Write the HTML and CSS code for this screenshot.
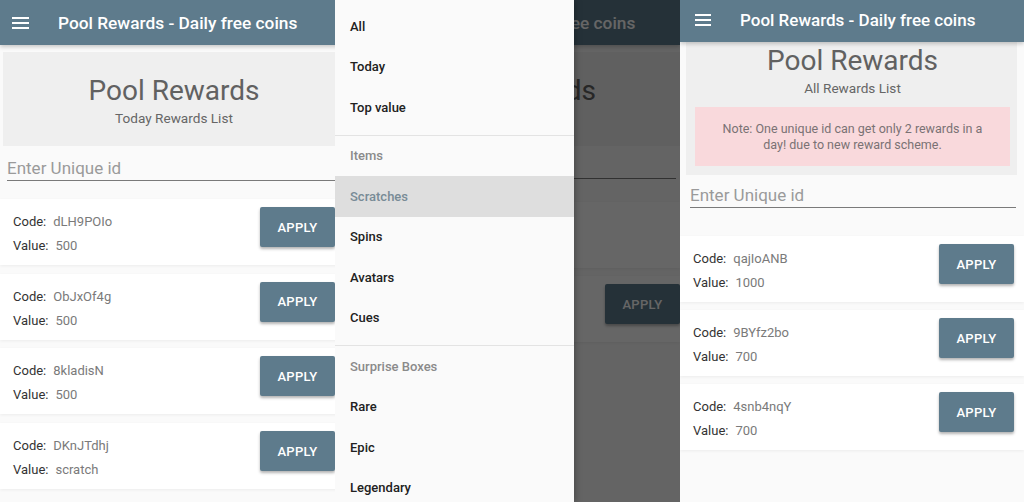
FILE: index.html
```html
<!DOCTYPE html>
<html lang="en">

<head>
    <meta charset="UTF-8">
    <meta name="viewport" content="width=device-width, initial-scale=1.0">
    <title>Pool Rewards - Daily free coins</title>
    <link rel="stylesheet" href="styles.css">
</head>

<body>

    <div class="collage">

        <!-- Tela 1: lista de hoje -->
        <section class="phone phone-today">
            <div class="app">
                <header class="topbar">
                    <svg class="menu-icon" width="17" height="12" viewBox="0 0 17 12"><path d="M0 1h17M0 6h17M0 11h17" stroke="#fff" stroke-width="2"/></svg>
                    <h1 class="topbar-title">Pool Rewards - Daily free coins</h1>
                </header>
                <div class="hero">
                    <h2 class="hero-title">Pool Rewards</h2>
                    <p class="hero-sub">Today Rewards List</p>
                </div>
                <div class="field"><input type="text" placeholder="Enter Unique id"></div>
                <ul class="rewards">
                    <li class="reward">
                        <div class="reward-info">
                            <p><span class="lbl">Code:</span><span class="val">dLH9POIo</span></p>
                            <p><span class="lbl">Value:</span><span class="val">500</span></p>
                        </div>
                        <button class="apply">APPLY</button>
                    </li>
                    <li class="reward">
                        <div class="reward-info">
                            <p><span class="lbl">Code:</span><span class="val">ObJxOf4g</span></p>
                            <p><span class="lbl">Value:</span><span class="val">500</span></p>
                        </div>
                        <button class="apply">APPLY</button>
                    </li>
                    <li class="reward">
                        <div class="reward-info">
                            <p><span class="lbl">Code:</span><span class="val">8kladisN</span></p>
                            <p><span class="lbl">Value:</span><span class="val">500</span></p>
                        </div>
                        <button class="apply">APPLY</button>
                    </li>
                    <li class="reward">
                        <div class="reward-info">
                            <p><span class="lbl">Code:</span><span class="val">DKnJTdhj</span></p>
                            <p><span class="lbl">Value:</span><span class="val">scratch</span></p>
                        </div>
                        <button class="apply">APPLY</button>
                    </li>
                </ul>
            </div>
        </section>

        <!-- Tela 2: menu lateral aberto -->
        <section class="phone phone-drawer">
            <div class="app">
                <header class="topbar">
                    <svg class="menu-icon" width="17" height="12" viewBox="0 0 17 12"><path d="M0 1h17M0 6h17M0 11h17" stroke="#fff" stroke-width="2"/></svg>
                    <h1 class="topbar-title">Pool Rewards - Daily free coins</h1>
                </header>
                <div class="hero">
                    <h2 class="hero-title">Pool Rewards</h2>
                    <p class="hero-sub">Today Rewards List</p>
                </div>
                <div class="field"><input type="text" placeholder="Enter Unique id"></div>
                <ul class="rewards">
                    <li class="reward reward-blank"></li>
                    <li class="reward reward-end">
                        <button class="apply">APPLY</button>
                    </li>
                </ul>
            </div>
            <div class="scrim"></div>
            <nav class="drawer">
                <ul class="drawer-list">
                    <li class="drawer-item">All</li>
                    <li class="drawer-item">Today</li>
                    <li class="drawer-item">Top value</li>
                    <li class="drawer-divider"></li>
                    <li class="drawer-item drawer-head">Items</li>
                    <li class="drawer-item active">Scratches</li>
                    <li class="drawer-item">Spins</li>
                    <li class="drawer-item">Avatars</li>
                    <li class="drawer-item">Cues</li>
                    <li class="drawer-divider"></li>
                    <li class="drawer-item drawer-head">Surprise Boxes</li>
                    <li class="drawer-item">Rare</li>
                    <li class="drawer-item">Epic</li>
                    <li class="drawer-item">Legendary</li>
                </ul>
            </nav>
        </section>

        <!-- Tela 3: todas as recompensas -->
        <section class="phone phone-all">
            <div class="app">
                <header class="topbar">
                    <svg class="menu-icon" width="16" height="12" viewBox="0 0 16 12"><path d="M0 1h16M0 6h16M0 11h16" stroke="#fff" stroke-width="2"/></svg>
                    <h1 class="topbar-title">Pool Rewards - Daily free coins</h1>
                </header>
                <div class="hero">
                    <h2 class="hero-title">Pool Rewards</h2>
                    <p class="hero-sub">All Rewards List</p>
                    <p class="note">Note: One unique id can get only 2 rewards in a day! due to new reward scheme.</p>
                </div>
                <div class="field"><input type="text" placeholder="Enter Unique id"></div>
                <ul class="rewards">
                    <li class="reward">
                        <div class="reward-info">
                            <p><span class="lbl">Code:</span><span class="val">qajIoANB</span></p>
                            <p><span class="lbl">Value:</span><span class="val">1000</span></p>
                        </div>
                        <button class="apply">APPLY</button>
                    </li>
                    <li class="reward">
                        <div class="reward-info">
                            <p><span class="lbl">Code:</span><span class="val">9BYfz2bo</span></p>
                            <p><span class="lbl">Value:</span><span class="val">700</span></p>
                        </div>
                        <button class="apply">APPLY</button>
                    </li>
                    <li class="reward">
                        <div class="reward-info">
                            <p><span class="lbl">Code:</span><span class="val">4snb4nqY</span></p>
                            <p><span class="lbl">Value:</span><span class="val">700</span></p>
                        </div>
                        <button class="apply">APPLY</button>
                    </li>
                </ul>
            </div>
        </section>

    </div>

</body>

</html>
```

FILE: styles.css
```css
body {
    margin: 0;
    font-family: Roboto, "Liberation Sans", Arial, sans-serif;
    background-color: #fafafa;
    overflow: hidden;
}

.collage {
    display: flex;
    width: 1024px;
    height: 502px;
}

.phone {
    position: relative;
    flex: none;
    height: 502px;
    overflow: hidden;
    background-color: #fafafa;
}

.phone-today {
    width: 335px;
}

.phone-drawer {
    width: 345px;
}

.phone-all {
    width: 344px;
}

.app {
    width: 345px;
}

.phone-drawer .app {
    width: 342px;
    margin-left: 3px;
}

.phone-all .app {
    width: 344px;
}

/* Barra superior */
.topbar {
    position: relative;
    z-index: 1;
    display: flex;
    align-items: center;
    gap: 29px;
    height: 45px;
    padding-left: 12px;
    box-sizing: border-box;
    background-color: #5e7b8c;
    box-shadow: 0 2px 4px rgba(0, 0, 0, 0.2);
}

.phone-all .topbar {
    height: 42px;
    padding-left: 15px;
    padding-bottom: 3px;
}

.menu-icon {
    flex: none;
}

.topbar-title {
    margin: 0;
    font-size: 17.3px;
    font-weight: 500;
    color: #fff;
    white-space: nowrap;
}

.phone-all .topbar-title {
    font-size: 17px;
}

/* Cabeçalho cinza */
.hero {
    margin: 7px 0 0 3px;
    padding: 21px 0 19px;
    background-color: #efefef;
    text-align: center;
}

.phone-all .hero {
    margin: 0 7px 0 6px;
    padding: 1px 7px 9px 9px;
}

.hero-title {
    margin: 0;
    font-size: 28px;
    line-height: 36px;
    font-weight: 400;
    color: #616161;
}

.hero-sub {
    margin: 0;
    font-size: 13.6px;
    line-height: 18px;
    color: #666;
}

.note {
    margin: 10px 0 0;
    padding: 13.5px 16px;
    font-size: 12.5px;
    line-height: 16px;
    color: #7a7274;
    background-color: #f9d9dc;
}

/* Campo do id */
.field {
    margin: 10px 10px 0 7px;
}

.phone-drawer .field {
    margin: 8px 4px 0 7px;
}

.phone-all .field {
    margin: 8px 8px 0 10px;
}

.field input {
    display: block;
    width: 100%;
    height: 25px;
    padding: 0;
    border: none;
    border-bottom: 1px solid #7a7a7a;
    box-sizing: border-box;
    background: transparent;
    font-family: inherit;
    font-size: 17px;
    line-height: 24px;
    color: #333;
}

.field input::placeholder {
    color: #9a9a9a;
}

/* Lista de recompensas */
.rewards {
    display: flex;
    flex-direction: column;
    gap: 8px;
    margin: 18px 0 0;
    padding: 0;
    list-style: none;
}

.phone-today .rewards {
    gap: 8.7px;
}

.phone-drawer .rewards {
    margin-top: 23px;
}

.phone-all .rewards {
    margin-top: 28px;
}

.reward {
    display: flex;
    justify-content: space-between;
    align-items: flex-start;
    height: 66px;
    padding: 8px 10px 0 13px;
    box-sizing: border-box;
    background-color: #fff;
    box-shadow: 0 1px 3px rgba(0, 0, 0, 0.06);
}

.phone-drawer .reward {
    padding-right: 0;
}

.reward-end {
    justify-content: flex-end;
}

.reward-info {
    padding-top: 3px;
}

.reward-info p {
    margin: 0;
    font-size: 13px;
    line-height: 24px;
}

.lbl {
    color: #333;
}

.val {
    margin-left: 7px;
    color: #7a7a7a;
}

.apply {
    width: 75px;
    height: 40px;
    border: none;
    border-radius: 2px;
    background-color: #5e7b8c;
    color: #fff;
    font-family: inherit;
    font-size: 13px;
    font-weight: 500;
    letter-spacing: 0.3px;
    box-shadow: 0 2px 3px rgba(0, 0, 0, 0.3);
    cursor: pointer;
}

/* Menu lateral */
.scrim {
    position: absolute;
    inset: 0;
    z-index: 2;
    background-color: rgba(0, 0, 0, 0.6);
}

.drawer {
    position: absolute;
    top: 0;
    left: 0;
    bottom: 0;
    z-index: 3;
    width: 239px;
    background-color: #fafafa;
    box-shadow: 2px 0 6px rgba(0, 0, 0, 0.25);
}

.drawer-list {
    margin: 0;
    padding: 6px 0 0;
    list-style: none;
}

.drawer-item {
    display: flex;
    align-items: center;
    height: 40.5px;
    padding-left: 15px;
    font-size: 13px;
    font-weight: 500;
    color: #212121;
}

.drawer-head {
    color: #8a8a8a;
}

.drawer-item.active {
    background-color: #dedede;
    color: #788b96;
}

.drawer-divider {
    margin: 7px 0 0;
    border-top: 1px solid #e3e3e3;
}
```
